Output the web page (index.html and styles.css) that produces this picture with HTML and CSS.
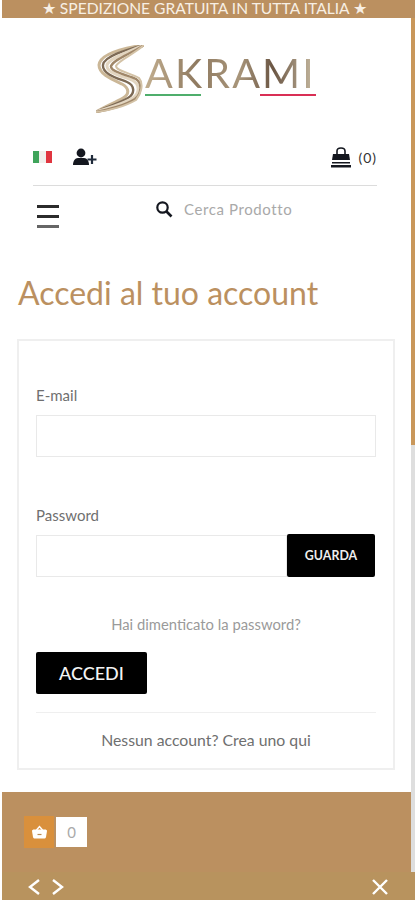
FILE: index.html
```html
<!DOCTYPE html>
<html lang="it">
<head>
    <meta charset="UTF-8">
    <meta name="viewport" content="width=device-width, initial-scale=1.0">
    <title>Accedi al tuo account</title>
    <link rel="stylesheet" href="styles.css">
</head>
<body>
    <div class="page">
        <div class="promo-bar">★ SPEDIZIONE GRATUITA IN TUTTA ITALIA ★</div>

        <div class="middle">
            <div class="main-column">
                <header class="header">
                    <div class="logo">
                        <svg width="48" height="68" viewBox="0 0 48 68" fill="none">
                            <path d="M48 0C28 3 4 9 3 20c0 9 12 14 23 19 7 4 8 10 1 14C18 58 8 62 0 67" stroke="#cbb797" stroke-width="3"/>
                            <path d="M48 0C30 5 8 11 7 20c-1 9 14 13 24 17 7 3 9 11 1 16-10 6-22 9-32 14" stroke="#7d6a55" stroke-width="2.400"/>
                            <path d="M48 0C33 7 13 13 11 20c-1 8 15 11 25 15 8 4 8 13 1 18-10 6-25 10-37 14" stroke="#e2d5c0" stroke-width="3"/>
                            <path d="M48 0C35 9 18 14 15 21c-1 6 17 9 25 13 7 5 5 15-1 20C30 60 12 65 0 67" stroke="#a08769" stroke-width="2.400"/>
                            <path d="M48 0C37 10 23 15 20 21c0 5 15 7 23 12 5 6 2 16-3 22C30 61 12 66 0 67" stroke="#d3c2a6" stroke-width="2"/>
                        </svg>
                        <div class="logo-word">
                            <span class="logo-text">AKRAMI</span>
                            <div class="logo-lines">
                                <span class="line-green"></span>
                                <span class="line-red"></span>
                            </div>
                        </div>
                    </div>

                    <div class="tools">
                        <div class="tools-left">
                            <svg width="19" height="14" viewBox="0 0 19 14" aria-label="Italiano">
                                <rect x="0" y="1" width="6" height="12" fill="#3fa45b"/>
                                <rect x="6" y="1" width="7" height="12" fill="#f1efec"/>
                                <rect x="13" y="1" width="6" height="12" fill="#e0353f"/>
                            </svg>
                            <svg width="24" height="18" viewBox="0 0 24 18" aria-label="Registrati">
                                <circle cx="8" cy="5" r="4.400" fill="#14171f"/>
                                <path d="M0 17c0-4 2-7 5-7h6c3 0 5 3 5 7z" fill="#14171f"/>
                                <path d="M19 7v9M14.500 11.500h9" stroke="#1f2a3a" stroke-width="2.200"/>
                            </svg>
                        </div>
                        <div class="cart">
                            <svg width="20" height="21" viewBox="0 0 20 21" aria-label="Carrello">
                                <path d="M6 7V4c0-4 8-4 8 0v3" fill="none" stroke="#14171f" stroke-width="1.600"/>
                                <path d="M2 7h16l1 6H1z" fill="#14171f"/>
                                <path d="M1 15h18v1.500H1zM0 18h20v2.500H0z" fill="#14171f"/>
                            </svg>
                            <span>(0)</span>
                        </div>
                    </div>

                    <div class="nav-row">
                        <div class="burger">
                            <span></span>
                            <span></span>
                            <span class="burger-last"></span>
                        </div>
                        <div class="search">
                            <svg width="18" height="18" viewBox="0 0 18 18" aria-label="Cerca">
                                <circle cx="7.500" cy="7.500" r="5.200" fill="none" stroke="#14171f" stroke-width="2.200"/>
                                <path d="M11.500 11.500l5 5" stroke="#14171f" stroke-width="2.600"/>
                            </svg>
                            <span class="search-text">Cerca Prodotto</span>
                        </div>
                    </div>
                </header>

                <main class="content">
                    <h1 class="page-title">Accedi al tuo account</h1>

                    <form class="login-card">
                        <label class="field-label">E-mail</label>
                        <div class="text-input"></div>

                        <label class="field-label label-password">Password</label>
                        <div class="password-row">
                            <div class="text-input"></div>
                            <button type="button" class="btn-show">GUARDA</button>
                        </div>

                        <p class="forgot">Hai dimenticato la password?</p>
                        <button type="button" class="btn-login">ACCEDI</button>

                        <div class="no-account">Nessun account? Crea uno qui</div>
                    </form>
                </main>

                <div class="basket-panel">
                    <div class="basket-icon">
                        <svg width="15" height="14" viewBox="0 0 15 14" aria-label="Carrello">
                            <path d="M4.500 5l3-3.500 3 3.500" fill="none" stroke="#fff" stroke-width="1.400"/>
                            <path d="M0 6c0-1 1-1.500 2-1.500h11c1 0 2 .5 2 1.500l-1 6c-.2 1-1 1.500-2 1.500H3c-1 0-1.800-.5-2-1.500z" fill="#fff"/>
                            <path d="M5.500 9.500h4" stroke="#b98a50" stroke-width="1.200"/>
                        </svg>
                    </div>
                    <div class="basket-count">0</div>
                </div>
            </div>

            <div class="scrollbar">
                <div class="scrollbar-thumb"></div>
            </div>
        </div>

        <footer class="bottom-nav">
            <div class="arrows">
                <svg width="12" height="16" viewBox="0 0 12 16"><path d="M11 1L2 8l9 7" fill="none" stroke="#fff" stroke-width="2.400"/></svg>
                <svg width="12" height="16" viewBox="0 0 12 16"><path d="M1 1l9 7-9 7" fill="none" stroke="#fff" stroke-width="2.400"/></svg>
            </div>
            <svg width="16" height="16" viewBox="0 0 16 16" aria-label="Chiudi"><path d="M1 1l14 14M15 1L1 15" stroke="#fff" stroke-width="2.400"/></svg>
        </footer>
    </div>
</body>
</html>
```

FILE: styles.css
```css
:root {
    --gold: #bb9060;
    --gold-bright: #d9903c;
    --border: #e9e9e9;
    --text: #6f6f6f;
    --text-light: #9a9a9a;
}

* {
    box-sizing: border-box;
    margin: 0;
    padding: 0;
}

html, body {
    height: 100%;
    overflow: hidden;
}

body {
    font-family: 'Lato', sans-serif;
    background-color: #fff;
    color: var(--text);
}

.page {
    height: 900px;
    display: flex;
    flex-direction: column;
    padding-left: 2px;
}

.promo-bar {
    height: 18px;
    padding-right: 8px;
    background-color: var(--gold);
    color: #f7efe4;
    font-size: 15.600px;
    line-height: 16px;
    text-align: center;
}

.middle {
    flex: 1;
    display: flex;
    min-height: 0;
}

.main-column {
    flex: 1;
    display: flex;
    flex-direction: column;
}

.scrollbar {
    width: 4px;
    background-color: #dedede;
}

.scrollbar-thumb {
    height: 427px;
    background-color: #c9975a;
}

.header {
    padding: 0 34px 0 31px;
}

.logo {
    height: 105px;
    display: flex;
    justify-content: center;
    align-items: flex-start;
    gap: 1px;
    padding: 27px 0 0 2px;
}

.logo-word {
    margin-top: 11px;
}

.logo-text {
    display: block;
    font-size: 41px;
    font-weight: 400;
    line-height: 34px;
    letter-spacing: 2.200px;
    background: linear-gradient(90deg, #c2ae8f 0%, #8f7a60 30%, #a8957a 55%, #6b5644 75%, #c9bca3 100%);
    -webkit-background-clip: text;
    background-clip: text;
    color: transparent;
}

.logo-lines {
    display: flex;
    justify-content: space-between;
    margin-top: 4px;
}

.logo-lines span {
    width: 56px;
    height: 2px;
}

.line-green {
    background-color: #4fae6c;
}

.line-red {
    background-color: #d92f55;
}

.tools {
    height: 63px;
    display: flex;
    justify-content: space-between;
    align-items: center;
    padding: 12px 0 6px;
    border-bottom: 1px solid #dcdcdc;
}

.tools-left {
    display: flex;
    align-items: center;
    gap: 21px;
}

.cart {
    display: flex;
    align-items: center;
    gap: 7px;
    color: #333;
    font-size: 14px;
    letter-spacing: 1px;
}

.nav-row {
    display: flex;
    padding: 16px 0 0 4px;
}

.burger {
    width: 22px;
    display: flex;
    flex-direction: column;
    gap: 7px;
    padding-top: 3px;
}

.burger span {
    height: 3px;
    background-color: #2b2b2b;
}

.burger .burger-last {
    background-color: #666;
}

.search {
    display: flex;
    align-items: center;
    gap: 11px;
    margin-left: 96px;
    margin-top: -5px;
    height: 24px;
}

.search-text {
    font-size: 15px;
    color: #a9a9a9;
    letter-spacing: 0.600px;
}

.content {
    flex: 1;
    padding: 45px 16px 0 15px;
}

.page-title {
    font-size: 32px;
    font-weight: 400;
    line-height: 40px;
    color: var(--gold);
    margin: 0 0 26px 1px;
}

.login-card {
    height: 431px;
    border: 2px solid #efefef;
    padding: 44px 17px 0 17px;
}

.field-label {
    display: block;
    font-size: 15px;
    line-height: 20px;
    margin-bottom: 10px;
}

.label-password {
    margin-top: 48px;
}

.text-input {
    height: 42px;
    border: 1px solid var(--border);
    flex: 1;
}

.password-row {
    display: flex;
    margin-right: 1px;
}

.btn-show {
    width: 88px;
    height: 43px;
    margin-top: -1px;
    background-color: #000;
    color: #eee;
    border: none;
    border-radius: 2px;
    font-family: inherit;
    font-size: 12.400px;
    font-weight: 700;
}

.forgot {
    margin-top: 38px;
    text-align: center;
    font-size: 14.800px;
    line-height: 18px;
    color: var(--text-light);
}

.btn-login {
    display: block;
    width: 111px;
    height: 42px;
    margin-top: 19px;
    background-color: #000;
    color: #f4f4f4;
    border: none;
    border-radius: 2px;
    font-family: inherit;
    font-size: 18px;
    font-weight: 500;
}

.no-account {
    margin-top: 18px;
    padding-top: 17px;
    border-top: 1px solid #efefef;
    text-align: center;
    font-size: 15.800px;
    line-height: 20px;
    color: var(--text);
}

.basket-panel {
    height: 80px;
    background-color: var(--gold);
    display: flex;
    gap: 2px;
    padding: 24px 0 0 22px;
}

.basket-icon {
    width: 30px;
    height: 32px;
    background-color: var(--gold-bright);
    display: flex;
    align-items: center;
    justify-content: center;
}

.basket-count {
    width: 31px;
    height: 30px;
    margin-top: 1px;
    background-color: #fff;
    color: #aaa;
    font-size: 15px;
    line-height: 30px;
    text-align: center;
}

.bottom-nav {
    height: 28px;
    flex-shrink: 0;
    background-color: #b8935e;
    display: flex;
    justify-content: space-between;
    align-items: center;
    padding: 2px 27px 0 26px;
}

.arrows {
    display: flex;
    gap: 12px;
}
```
